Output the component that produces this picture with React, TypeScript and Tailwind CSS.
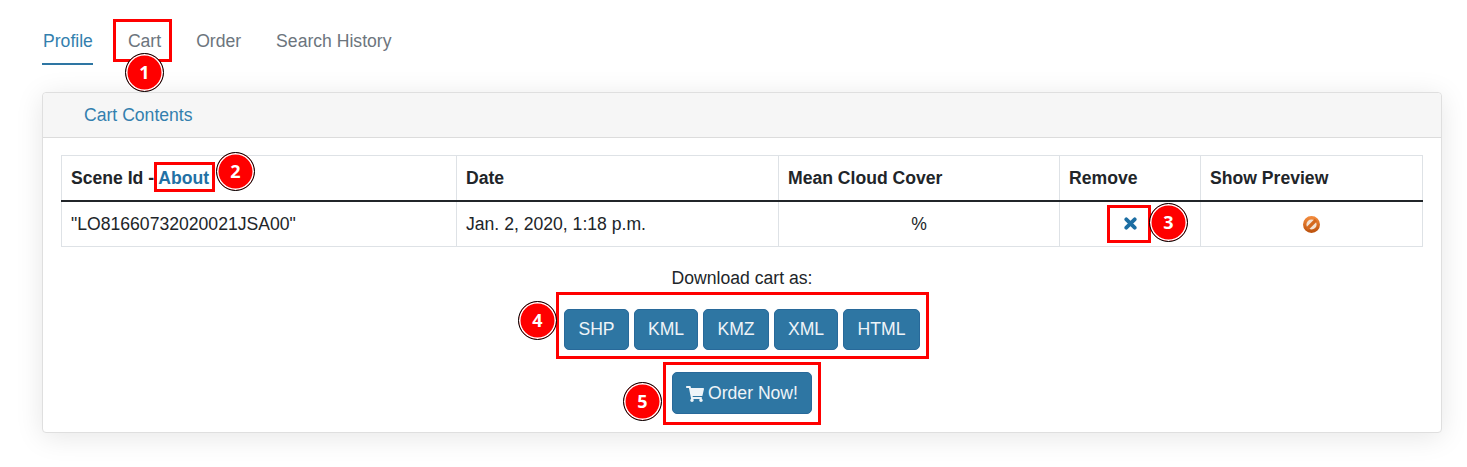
import React from "react";
import { FaShoppingCart } from "react-icons/fa";

function Badge({ n, className }: { n: string; className: string }) {
  return (
    <div className={`absolute w-[39px] h-[39px] rounded-full bg-[#ff0000] border-[1px] border-black flex items-center justify-center text-white font-bold text-[18px] shadow-[inset_0_0_0_1.5px_#ffffff] font-['Noto_Sans',sans-serif] ${className}`}>
      {n}
    </div>
  );
}

function Box({ className }: { className: string }) {
  return <div className={`absolute border-[3px] border-[#ff0000] ${className}`} />;
}

const Btn = ({ children, className = "" }: { children: React.ReactNode; className?: string }) => (
  <button className={`h-[41px] rounded-[5px] bg-[#2e76a3] border border-[#28699a] text-[#eef4f8] text-[17.6px] leading-none flex items-center justify-center pt-px ${className}`}>
    {children}
  </button>
);

export default function App() {
  return (
    <div className="relative w-[1467px] h-[467px] bg-white overflow-hidden font-['Liberation_Sans',Arial,sans-serif] text-[17.6px] text-[#212529]">
      <div className="pl-[42px] pt-[20px]">
        <nav className="flex h-[45px] gap-[35px] text-[#6c757d]">
          <a className="h-[45px] pl-px leading-[42px] text-[#337fae] border-b-2 border-[#2e76a3]">Profile</a>
          <a className="leading-[42px]">Cart</a>
          <a className="leading-[42px]">Order</a>
          <a className="leading-[42px]">Search History</a>
        </nav>
      </div>

      <section className="mx-[42px] mt-[27px] w-[1400px] h-[341px] border border-[#dfdfdf] rounded-[4px] shadow-[0_4px_28px_rgba(0,0,0,0.1)] bg-white">
        <header className="h-[45px] bg-[#f6f6f6] border-b border-[#dcdcdc] rounded-t-[4px] pl-[41px] leading-[44px] text-[#337fae]">
          Cart Contents
        </header>
        <div className="px-[18px] pt-[17px]">
          <table className="w-[1361px] table-fixed border-collapse border border-[#dee2e6]">
            <colgroup>
              <col className="w-[395px]" />
              <col className="w-[322px]" />
              <col className="w-[281px]" />
              <col className="w-[141px]" />
              <col className="w-[222px]" />
            </colgroup>
            <thead>
              <tr className="h-[45px] text-left">
                <th className="border border-[#dee2e6] border-b-2 border-b-[#212529] pl-[9px] font-bold">
                  Scene Id - <a className="text-[#2271a5]">About</a>
                </th>
                <th className="border border-[#dee2e6] border-b-2 border-b-[#212529] pl-[9px] font-bold">Date</th>
                <th className="border border-[#dee2e6] border-b-2 border-b-[#212529] pl-[9px] font-bold">Mean Cloud Cover</th>
                <th className="border border-[#dee2e6] border-b-2 border-b-[#212529] pl-[9px] font-bold">Remove</th>
                <th className="border border-[#dee2e6] border-b-2 border-b-[#212529] pl-[9px] font-bold">Show Preview</th>
              </tr>
            </thead>
            <tbody>
              <tr className="h-[46px]">
                <td className="border border-[#dee2e6] pl-[9px]">"LO81660732020021JSA00"</td>
                <td className="border border-[#dee2e6] pl-[9px]">Jan. 2, 2020, 1:18 p.m.</td>
                <td className="border border-[#dee2e6] text-center">%</td>
                <td className="border border-[#dee2e6]">
                  <div className="flex justify-center">
                    <svg width="13" height="13" viewBox="0 0 13 13">
                      <path d="M2.3 2.3 L10.7 10.7 M10.7 2.3 L2.3 10.7" stroke="#1d6ea3" strokeWidth="3.8" strokeLinecap="round" />
                    </svg>
                  </div>
                </td>
                <td className="border border-[#dee2e6]">
                  <div className="flex justify-center pt-[2px]">
                    <svg width="19" height="19" viewBox="0 0 19 19">
                      <defs>
                        <linearGradient id="ban" x1="0" y1="0" x2="0" y2="1">
                          <stop offset="0" stopColor="#f0883a" />
                          <stop offset="1" stopColor="#bf5510" />
                        </linearGradient>
                      </defs>
                      <circle cx="9.5" cy="9.5" r="6.8" fill="#f3e3d4" stroke="url(#ban)" strokeWidth="3.4" />
                      <path d="M5 14 L14 5" stroke="#d4691e" strokeWidth="3.2" />
                    </svg>
                  </div>
                </td>
              </tr>
            </tbody>
          </table>

          <p className="mt-[21px] h-[21px] leading-[21px] text-center">Download cart as:</p>
          <div className="mt-[20px] flex justify-center gap-[5px]">
            <Btn className="w-[65px]">SHP</Btn>
            <Btn className="w-[64px]">KML</Btn>
            <Btn className="w-[66px]">KMZ</Btn>
            <Btn className="w-[64px]">XML</Btn>
            <Btn className="w-[77px]">HTML</Btn>
          </div>
          <div className="mt-[22px] flex justify-center">
            <Btn className="w-[140px] !h-[42px] gap-[4px]">
              <FaShoppingCart className="w-[18px] h-[16px]" />
              Order Now!
            </Btn>
          </div>
        </div>
      </section>

      <Box className="left-[113px] top-[19px] w-[59px] h-[43px]" />
      <Box className="left-[154px] top-[162px] w-[61px] h-[30px]" />
      <Box className="left-[1107px] top-[205px] w-[44px] h-[38px]" />
      <Box className="left-[556px] top-[292px] w-[373px] h-[67px]" />
      <Box className="left-[663px] top-[362px] w-[158px] h-[63px]" />
      <Badge n="1" className="left-[125px] top-[53px]" />
      <Badge n="2" className="left-[216px] top-[152px]" />
      <Badge n="3" className="left-[1149px] top-[203px]" />
      <Badge n="4" className="left-[518px] top-[301px]" />
      <Badge n="5" className="left-[623px] top-[382px]" />
    </div>
  );
}
